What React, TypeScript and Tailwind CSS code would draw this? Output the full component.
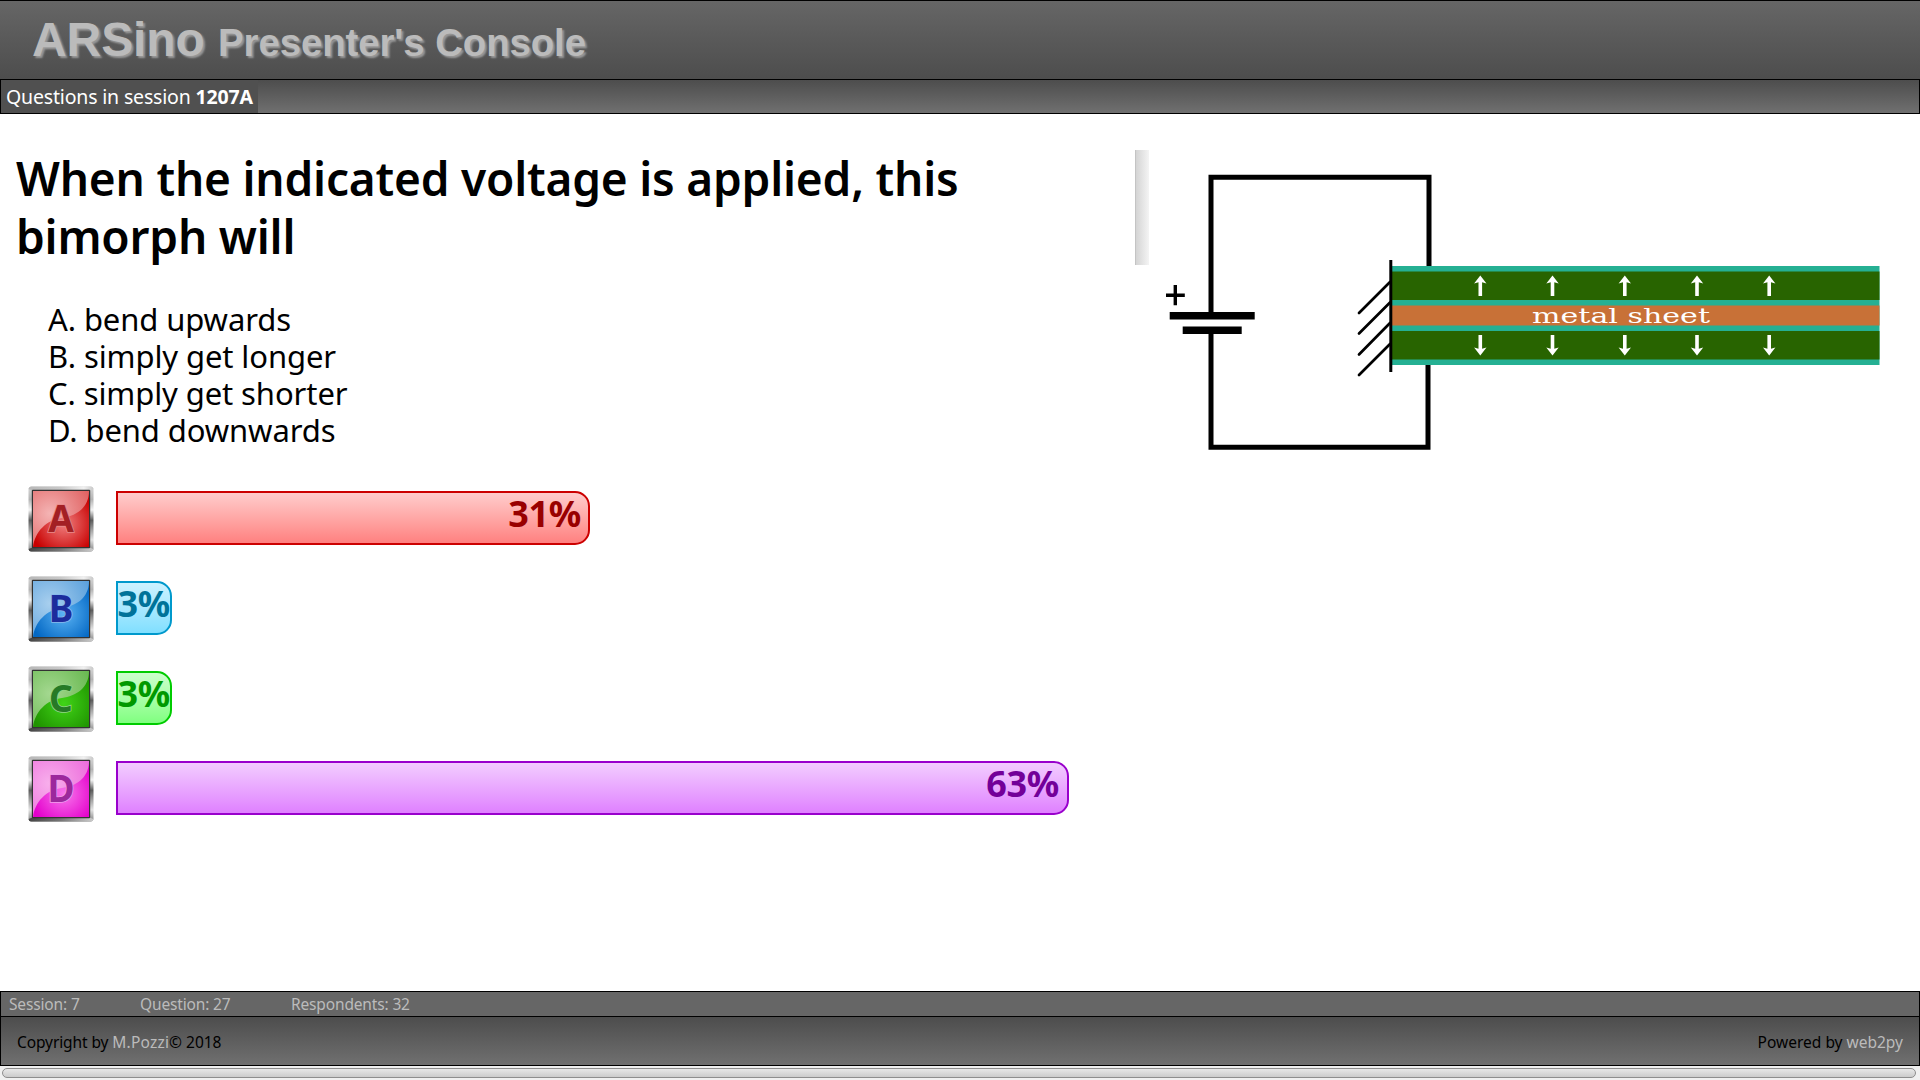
import React from 'react';

const noto = "font-['Noto_Sans','Open_Sans',sans-serif]";

type Answer = {
  letter: string;
  percent: string;
  bar: string;
  face: [string, string];
  gloss: [string, string];
  ink: string;
  halo: string;
};

const answers: Answer[] = [
  {
    letter: 'A',
    percent: '31%',
    bar: 'w-[474px] pr-[7px] border-[#cc0000] from-[#ffcccc] to-[#ff8080] text-[#990000]',
    face: ['#f08080', '#c80000'],
    gloss: ['#f4b4b4', '#e06060'],
    ink: '#a32024',
    halo: '#e88a8a',
  },
  {
    letter: 'B',
    percent: '3%',
    bar: 'w-[56px] border-[#0099cc] from-[#ccf2ff] to-[#80dfff] text-[#007399]',
    face: ['#5cb4f4', '#0468c4'],
    gloss: ['#a8cfee', '#5aa0dc'],
    ink: '#1c2c9c',
    halo: '#86b8ec',
  },
  {
    letter: 'C',
    percent: '3%',
    bar: 'w-[56px] border-[#00cc00] from-[#ccffcc] to-[#80ff80] text-[#009900]',
    face: ['#40d418', '#209400'],
    gloss: ['#a4d890', '#68b850'],
    ink: '#267a26',
    halo: '#92d488',
  },
  {
    letter: 'D',
    percent: '63%',
    bar: 'w-[953px] pr-[8px] border-[#9900cc] from-[#f2ccff] to-[#df80ff] text-[#730099]',
    face: ['#f878ec', '#e400cc'],
    gloss: ['#f8b0ec', '#ec6cdc'],
    ink: '#9c289c',
    halo: '#f09cec',
  },
];

function Badge({ letter, face, gloss, ink, halo }: Answer) {
  const id = (name: string) => `${name}-${letter}`;
  return (
    <svg width="66" height="66" viewBox="0 0 66 66" className="shrink-0">
      <defs>
        <linearGradient id={id('rim')} x1="0" y1="0" x2="0" y2="1">
          <stop offset="0" stopColor="#d8d8d8" />
          <stop offset=".2" stopColor="#b4b4b4" />
          <stop offset=".36" stopColor="#f4f4f4" />
          <stop offset=".52" stopColor="#5c5c5c" />
          <stop offset=".68" stopColor="#a8a8a8" />
          <stop offset=".82" stopColor="#e4e4e4" />
          <stop offset="1" stopColor="#808080" />
        </linearGradient>
        <linearGradient id={id('top')} x1="0" y1="0" x2="1" y2="0">
          <stop offset="0" stopColor="#b8b8b8" />
          <stop offset=".5" stopColor="#c8c8c8" />
          <stop offset=".85" stopColor="#f0f0f0" />
          <stop offset="1" stopColor="#c8c8c8" />
        </linearGradient>
        <linearGradient id={id('base')} x1="0" y1="0" x2="1" y2="0">
          <stop offset="0" stopColor="#444" />
          <stop offset=".5" stopColor="#777" />
          <stop offset="1" stopColor="#ccc" />
        </linearGradient>
        <radialGradient id={id('face')} cx=".55" cy=".58" r=".6">
          <stop offset="0" stopColor={face[0]} />
          <stop offset="1" stopColor={face[1]} />
        </radialGradient>
        <radialGradient id={id('gloss')} cx=".3" cy=".4" r=".8">
          <stop offset="0" stopColor={gloss[0]} />
          <stop offset="1" stopColor={gloss[1]} />
        </radialGradient>
      </defs>
      <rect x=".5" y=".5" width="65" height="65" rx="3" fill={`url(#${id('rim')})`} />
      <path d="M3 .5h60q2 0 2.500 2.500l-4 1.500H4.500L.5 3Q1 .5 3 .5z" fill={`url(#${id('top')})`} />
      <path d="M.5 63l4-1.500h57l4 1.500q-.5 2.500-2.500 2.500H3q-2 0-2.500-2.500z" fill={`url(#${id('base')})`} />
      <rect x="3.800" y="3.800" width="58.400" height="58.400" rx="1" fill="#333" />
      <rect x="5" y="5" width="56" height="56" fill={`url(#${id('face')})`} />
      <path d="M5 5h56C61 22 48 30 34 32C18 34 7 46 5 61z" fill={`url(#${id('gloss')})`} />
      <text
        x="33"
        y="46"
        textAnchor="middle"
        fontFamily="'Noto Sans', sans-serif"
        fontWeight="700"
        fontSize="37"
        fill={ink}
        stroke={halo}
        strokeWidth="1.600"
        paintOrder="stroke"
      >
        {letter}
      </text>
    </svg>
  );
}

const arrowXs = [360.3, 432.5, 504.8, 577, 649.2];

function Bimorph() {
  return (
    <svg width="770" height="320" viewBox="0 0 770 320" className="block">
      <g fill="none" stroke="#000" strokeWidth="5">
        <path d="M91 173V37.300H309V127" />
        <path d="M91 192V307.300H308V224" />
      </g>
      <rect x="49.700" y="172" width="85" height="7.500" />
      <rect x="62.700" y="186.500" width="59" height="7.500" />
      <path d="M46 155.200H64.800M55.300 145V165.300" stroke="#000" strokeWidth="3.400" />
      <path
        d="M270 142L239 173M270 162.500L239 193.500M270 183L239 214.500M270 204L239 235"
        stroke="#000"
        strokeWidth="2.700"
        strokeLinecap="round"
      />
      <rect x="271.500" y="126" width="488" height="99" fill="#25b093" />
      <rect x="271.500" y="131.500" width="488" height="28.500" fill="#286400" />
      <rect x="271.500" y="165.500" width="488" height="20" fill="#c87137" />
      <rect x="271.500" y="191" width="488" height="28.500" fill="#286400" />
      <path d="M270.800 120V232" stroke="#000" strokeWidth="3" />
      {arrowXs.map((x) => (
        <g key={x} transform={`translate(${x} 0)`} fill="#fff">
          <path d="M0 135.500L6.200 143.500L1.800 142.300V156H-1.800V142.300L-6.200 143.500z" />
          <path d="M0 215.500L6.200 207.500L1.800 208.700V195H-1.800V208.700L-6.200 207.500z" />
        </g>
      ))}
      <text
        x="412"
        y="183"
        fontFamily="'DejaVu Serif', serif"
        fontSize="19.500"
        textLength="178"
        lengthAdjust="spacingAndGlyphs"
        fill="#fff"
      >
        metal sheet
      </text>
    </svg>
  );
}

export default function App() {
  return (
    <div className={`flex h-[1080px] w-[1920px] flex-col overflow-hidden bg-white text-black ${noto}`}>
      <header className="h-[79px] shrink-0 border-t border-black bg-linear-to-b from-[#666666] to-[#4d4d4d] pl-[32px]">
        <h1 className="whitespace-nowrap font-['Liberation_Sans',Arial,sans-serif] text-[48px] leading-[77px] font-bold text-[#bbbbbb] [text-shadow:2px_2px_2px_#999999]">
          <span className="tracking-[-0.1px]">ARSino</span>{' '}
          <span className="text-[38.4px] tracking-[-0.1px]">Presenter's Console</span>
        </h1>
      </header>

      <nav className="flex h-[35px] shrink-0 border border-black bg-linear-to-b from-[#4d4d4d] to-[#707070]">
        <div className="w-[257px] bg-[#505050] pl-[5px] text-[19.5px] leading-[33px] tracking-[-0.17px] whitespace-nowrap text-white">
          Questions in session <b>1207A</b>
        </div>
      </nav>

      <main className="flex flex-1">
        <section className="w-[1135px] shrink-0 pt-[35px]">
          <h2 className="pl-[16px] text-[46px] leading-[58px] font-semibold tracking-[-0.2px]">
            When the indicated voltage is applied, this
            <br />
            bimorph will
          </h2>
          <ol className="mt-[36px] pl-[48px] text-[31px] leading-[37px] tracking-[-0.1px]">
            <li>A. bend upwards</li>
            <li>B. simply get longer</li>
            <li>C. simply get shorter</li>
            <li>D. bend downwards</li>
          </ol>
          <div className="mt-[37px] flex flex-col gap-[24px] pl-[28px]">
            {answers.map((a) => (
              <div key={a.letter} className="flex h-[66px] gap-[22px]">
                <Badge {...a} />
                <div
                  className={`mt-[5px] flex h-[54px] justify-end rounded-r-[15px] border-2 bg-linear-to-b text-[36px] leading-[42px] font-bold tracking-[-0.3px] ${a.bar}`}
                >
                  {a.percent}
                </div>
              </div>
            ))}
          </div>
        </section>
        <aside className="flex pt-[36px]">
          <div className="-mr-[14px] h-[115px] w-[14px] border-l border-[#c4c4c4] bg-linear-to-r from-[#d4d4d4] to-[#f4f4f4]" />
          <div className="-mt-[10px] -ml-[15px]">
            <Bimorph />
          </div>
        </aside>
      </main>

      <footer className="shrink-0">
        <div className="flex h-[25px] border border-b-0 border-black bg-[#666666] pl-[8px] text-[15.5px] leading-[25px] tracking-[-0.15px] whitespace-nowrap text-[#bbbbbb]">
          <span className="w-[131px]">Session: 7</span>
          <span className="w-[151px]">Question: 27</span>
          <span>Respondents: 32</span>
        </div>
        <div className="flex h-[50px] justify-between border border-black bg-linear-to-b from-[#4d4d4d] to-[#707070] px-[16px] text-[15.5px] leading-[50px] whitespace-nowrap">
          <p>
            <span className="tracking-[-0.1px]">Copyright by </span>
            <span className="tracking-[0.2px] text-[#bbbbbb]">M.Pozzi</span>© 2018
          </p>
          <p>
            Powered by <span className="text-[#bbbbbb]">web2py</span>
          </p>
        </div>
        <div className="h-[14px] bg-[#f0f0f0] px-[2px] pt-[2px]">
          <div className="h-[10px] w-[1914px] rounded-full border border-[#8e8e8e] bg-linear-to-b from-[#e8e8e8] to-[#cccccc]" />
        </div>
      </footer>
    </div>
  );
}
